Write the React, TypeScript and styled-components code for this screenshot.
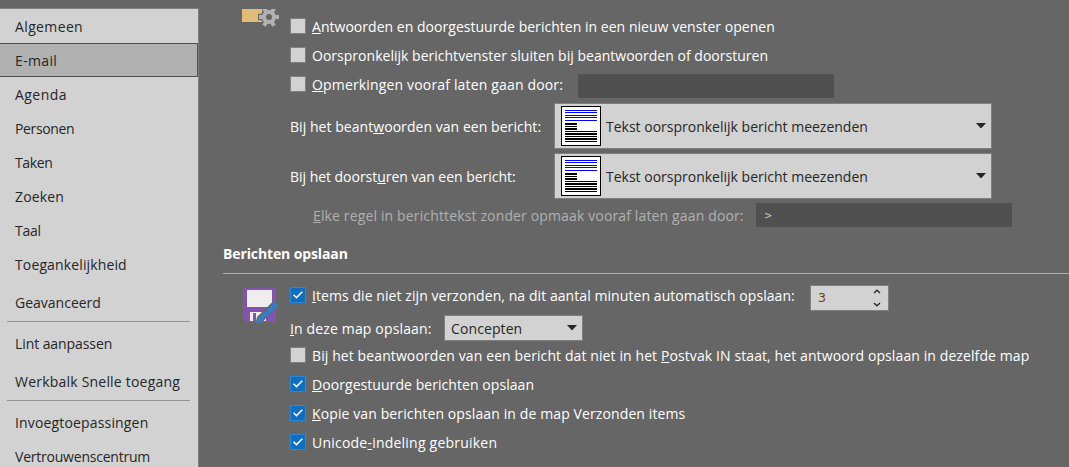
import React, { useState } from 'react';
import styled, { createGlobalStyle } from 'styled-components';

const GlobalStyle = createGlobalStyle`
  * {
    box-sizing: border-box;
  }

  body {
    margin: 0;
    background-color: #666666;
    overflow: hidden;
  }
`;

const Window = styled.div`
  display: flex;
  width: 1069px;
  height: 467px;
  overflow: hidden;

  background-color: #666666;
  color: #ffffff;
  font-family: 'Open Sans', 'Noto Sans', sans-serif;
  font-size: 14px;
  line-height: 20px;
  white-space: nowrap;
`;

const Sidebar = styled.nav`
  flex: none;
  width: 199px;
  height: 480px;
  margin-top: 8px;

  background-color: #d2d2d2;
  border-top: 1px solid #808080;
  border-right: 1px solid #808080;
`;

const NavItem = styled.div<{ $active: boolean; $spaced?: boolean }>`
  display: flex;
  align-items: center;
  height: 34px;
  margin-top: ${({ $spaced }) => ($spaced ? '4px' : '0')};
  padding: 0 0 0 15px;

  background-color: ${({ $active }) => ($active ? '#b1b1b1' : 'transparent')};
  border: 1px solid ${({ $active }) => ($active ? '#505050' : 'transparent')};
  border-left: none;
  color: #262626;
`;

const NavDivider = styled.div`
  height: 1px;
  margin: 2px 8px 4px 7px;

  background-color: #969696;
`;

const Content = styled.main`
  flex: 1;
  min-width: 0;
  padding: 9px 0 0 24px;
`;

const Section = styled.section`
  display: grid;
  grid-template-columns: 67px 1fr;
`;

const SectionIcon = styled.div<{ $top: number }>`
  padding: ${({ $top }) => $top}px 0 0 19px;

  svg {
    display: block;
  }
`;

const Rows = styled.div<{ $top: number }>`
  display: flex;
  flex-direction: column;
  padding-top: ${({ $top }) => $top}px;
`;

const SectionTitle = styled.h2`
  height: 47px;
  margin: 0;
  padding-top: 17px;

  border-bottom: 1px solid #b1b1b1;
  font-size: 14px;
  font-weight: 700;
  letter-spacing: -0.12px;
  line-height: 20px;
`;

const CheckRow = styled.label`
  display: flex;
  align-items: center;
  height: 29px;
  padding-bottom: 1px;
`;

const Box = styled.span<{ $checked: boolean }>`
  display: flex;
  flex: none;
  align-items: center;
  justify-content: center;
  width: 16px;
  height: 16px;
  margin-right: 6px;

  background-color: ${({ $checked }) => ($checked ? '#106ebe' : '#d2d2d2')};
  border: 1px solid ${({ $checked }) => ($checked ? '#2b88d8' : '#808080')};
`;

const FieldRow = styled.div<{ $top: number; $height: number; $indent?: number }>`
  display: flex;
  align-items: center;
  height: ${({ $height }) => $height}px;
  margin-top: ${({ $top }) => $top}px;
  padding-left: ${({ $indent = 0 }) => $indent}px;
`;

const FieldLabel = styled.span<{ $width: number; $disabled?: boolean }>`
  flex: none;
  width: ${({ $width }) => $width}px;

  color: ${({ $disabled }) => ($disabled ? '#b1b1b1' : '#ffffff')};
`;

const Label = styled.span<{ $spacing: number }>`
  display: block;
  padding-top: 2px;

  letter-spacing: ${({ $spacing }) => $spacing}px;
`;

const Key = styled.span`
  text-decoration: underline;
  text-decoration-thickness: 1px;
  text-underline-offset: 1px;
  text-decoration-skip-ink: none;
`;

const TextBox = styled.div<{ $shift?: number }>`
  display: flex;
  flex: none;
  align-items: center;
  width: 256px;
  height: 24px;
  margin-top: ${({ $shift = 0 }) => $shift}px;
  padding: 2px 0 0 8px;

  background-color: #505050;
  color: #d2c9a8;
  font-family: 'DejaVu Sans', sans-serif;
  font-size: 10px;
`;

const Select = styled.div<{ $width: number; $height: number }>`
  display: flex;
  flex: none;
  align-items: center;
  width: ${({ $width }) => $width}px;
  height: ${({ $height }) => $height}px;
  padding: 0 5px 0 6px;

  background-color: #d2d2d2;
  border: 1px solid #808080;
  color: #262626;

  svg {
    flex: none;
  }
`;

const SelectText = styled.span<{ $gap?: number }>`
  flex: 1;
  padding-left: ${({ $gap = 0 }) => $gap}px;
`;

const Spinner = styled.div`
  display: flex;
  flex: none;
  align-items: center;
  justify-content: space-between;
  width: 79px;
  height: 26px;
  margin-top: 6px;
  padding: 0 7px;

  background-color: #d2d2d2;
  border: 1px solid #808080;
  color: #7a3a08;
  font-family: 'DejaVu Sans', sans-serif;
  font-size: 12.5px;
`;

interface TextProps {
  text: string;
  spacing?: number;
}

// An underscore in front of a character marks its access key.
const Text: React.FC<TextProps> = ({ text, spacing = 0 }) => {
  const at = text.indexOf('_');

  if (at < 0) {
    return <Label $spacing={spacing}>{text}</Label>;
  }

  return (
    <Label $spacing={spacing}>
      {text.slice(0, at)}
      <Key>{text[at + 1]}</Key>
      {text.slice(at + 2)}
    </Label>
  );
};

interface CheckProps extends TextProps {
  initial?: boolean;
  labelWidth?: number;
  children?: React.ReactNode;
}

const Check: React.FC<CheckProps> = ({
  text,
  spacing,
  initial = false,
  labelWidth,
  children,
}) => {
  const [checked, setChecked] = useState(initial);

  return (
    <CheckRow>
      <Box $checked={checked} onClick={() => setChecked(!checked)}>
        {checked && (
          <svg width="14" height="14" viewBox="0 0 14 14">
            <path
              d="M2.5 6.8 5.5 9.6 11.3 3.8"
              fill="none"
              stroke="#ffffff"
              strokeWidth="1.5"
            />
          </svg>
        )}
      </Box>
      {labelWidth ? (
        <FieldLabel $width={labelWidth}>
          <Text text={text} spacing={spacing} />
        </FieldLabel>
      ) : (
        <Text text={text} spacing={spacing} />
      )}
      {children}
    </CheckRow>
  );
};

const Caret = () => (
  <svg width="10" height="9" viewBox="0 0 10 9">
    <path d="M0 1h10L5.5 6h-1z" fill="#262626" />
  </svg>
);

const MessageIcon = () => (
  <svg width="40" height="40" viewBox="0 0 40 40" shapeRendering="crispEdges">
    <rect width="40" height="40" fill="#000000" />
    <rect x="1" y="1" width="38" height="38" fill="#ffffff" />
    <path
      d="M4 4h32v1H4zM4 6h32v1H4zM4 9h32v1H4zM4 11h32v1H4zM4 14h32v1H4z"
      fill="#0000ff"
    />
    <path
      d="M4 17h12v2H4zM4 20h12v1H4zM4 22h12v2H4zM4 25h32v1H4zM4 27h32v2H4zM4 30h32v1H4zM4 32h32v2H4zM4 35h32v1H4z"
      fill="#000000"
    />
  </svg>
);

const GearIcon = () => (
  <svg width="38" height="18" viewBox="0 0 38 18">
    <rect width="20" height="13" fill="#e0bc78" />
    <circle cx="27" cy="8" r="8.2" fill="#666666" />
    <rect x="16" y="4.7" width="6" height="6.6" fill="#666666" />
    <g fill="#b1b1b1">
      {[0, 60, 120].map((angle) => (
        <path
          key={angle}
          d="M17 6h20v4H17z"
          transform={`rotate(${angle} 27 8)`}
        />
      ))}
      <circle cx="27" cy="8" r="7" />
    </g>
    <circle cx="27" cy="8" r="3" fill="#666666" />
  </svg>
);

const SaveIcon = () => (
  <svg width="37" height="37" viewBox="0 0 37 37">
    <path d="M1 0h33v34H4l-3-3z" fill="#8653ab" />
    <path d="M5 2h25v17H5zM8 24h16v9H8z" fill="#eeeeee" />
    <path d="M11 25h3v8h-3z" fill="#8653ab" />
    <path d="M32 12.5 36.5 17 20 34.5 13 37 15 29z" fill="#666666" />
    <path d="M33 13.5 36.5 17.5 19 34 14 36 15.5 31z" fill="#3a7cc0" />
    <path d="M29.5 16.5 33.5 20.5" stroke="#5d5f82" strokeWidth="0.7" />
  </svg>
);

const Arrows = () => (
  <svg width="8" height="18" viewBox="0 0 8 18">
    <path
      d="M1 4 4 1.2 7 4M1 14 4 16.8 7 14"
      fill="none"
      stroke="#262626"
      strokeWidth="1.3"
    />
  </svg>
);

interface Page {
  name: string;
  spacing: number;
  spaced?: boolean;
}

const pageGroups: Page[][] = [
  [
    { name: 'Algemeen', spacing: 0.37 },
    { name: 'E-mail', spacing: 0.35 },
    { name: 'Agenda', spacing: 0.45 },
    { name: 'Personen', spacing: -0.37 },
    { name: 'Taken', spacing: -0.35 },
    { name: 'Zoeken', spacing: 0.15 },
    { name: 'Taal', spacing: -0.25 },
    { name: 'Toegankelijkheid', spacing: 0.13 },
    { name: 'Geavanceerd', spacing: 0, spaced: true },
  ],
  [
    { name: 'Lint aanpassen', spacing: -0.08 },
    { name: 'Werkbalk Snelle toegang', spacing: 0.21 },
  ],
  [
    { name: 'Invoegtoepassingen', spacing: 0.16 },
    { name: 'Vertrouwenscentrum', spacing: -0.22 },
  ],
];

const App: React.FC = () => {
  const [active, setActive] = useState('E-mail');

  return (
    <>
      <GlobalStyle />
      <Window>
        <Sidebar>
          {pageGroups.map((pages, group) => (
            <React.Fragment key={pages[0].name}>
              {group > 0 && <NavDivider />}
              {pages.map(({ name, spacing, spaced }) => (
                <NavItem
                  key={name}
                  $active={name === active}
                  $spaced={spaced || name === 'Werkbalk Snelle toegang'}
                  onClick={() => setActive(name)}
                >
                  <Text text={name} spacing={spacing} />
                </NavItem>
              ))}
            </React.Fragment>
          ))}
        </Sidebar>
        <Content>
          <Section>
            <SectionIcon $top={0}>
              <GearIcon />
            </SectionIcon>
            <Rows $top={3}>
              <Check
                text="_Antwoorden en doorgestuurde berichten in een nieuw venster openen"
                spacing={0.03}
              />
              <Check
                text="Oorspronkelijk berichtvenster sluiten bij beantwoorden of doorsturen"
                spacing={0.016}
              />
              <Check
                text="_Opmerkingen vooraf laten gaan door:"
                spacing={0.16}
                labelWidth={266}
              >
                <TextBox $shift={4} />
              </Check>
              <FieldRow $top={4} $height={46}>
                <FieldLabel $width={264}>
                  <Text
                    text="Bij het beant_woorden van een bericht:"
                    spacing={0.05}
                  />
                </FieldLabel>
                <Select $width={438} $height={46}>
                  <MessageIcon />
                  <SelectText $gap={5}>
                    <Text text="Tekst oorspronkelijk bericht meezenden" />
                  </SelectText>
                  <Caret />
                </Select>
              </FieldRow>
              <FieldRow $top={4} $height={46}>
                <FieldLabel $width={264}>
                  <Text
                    text="Bij het doorst_uren van een bericht:"
                    spacing={-0.03}
                  />
                </FieldLabel>
                <Select $width={438} $height={46}>
                  <MessageIcon />
                  <SelectText $gap={5}>
                    <Text text="Tekst oorspronkelijk bericht meezenden" />
                  </SelectText>
                  <Caret />
                </Select>
              </FieldRow>
              <FieldRow $top={4} $height={24} $indent={23}>
                <FieldLabel $width={443} $disabled>
                  <Text
                    text="_Elke regel in berichttekst zonder opmaak vooraf laten gaan door:"
                    spacing={0.14}
                  />
                </FieldLabel>
                <TextBox>&gt;</TextBox>
              </FieldRow>
            </Rows>
          </Section>
          <SectionTitle>Berichten opslaan</SectionTitle>
          <Section>
            <SectionIcon $top={14}>
              <SaveIcon />
            </SectionIcon>
            <Rows $top={7}>
              <Check
                text="_Items die niet zijn verzonden, na dit aantal minuten automatisch opslaan:"
                spacing={0.07}
                labelWidth={498}
                initial
              >
                <Spinner>
                  3
                  <Arrows />
                </Spinner>
              </Check>
              <FieldRow $top={5} $height={26}>
                <FieldLabel $width={154}>
                  <Text text="_In deze map opslaan:" spacing={0.15} />
                </FieldLabel>
                <Select $width={139} $height={26}>
                  <SelectText>
                    <Text text="Concepten" spacing={0.1} />
                  </SelectText>
                  <Caret />
                </Select>
              </FieldRow>
              <Check
                text="Bij het beantwoorden van een bericht dat niet in het _Postvak IN staat, het antwoord opslaan in dezelfde map"
                spacing={0.1}
              />
              <Check
                text="_Doorgestuurde berichten opslaan"
                spacing={0.06}
                initial
              />
              <Check
                text="_Kopie van berichten opslaan in de map Verzonden items"
                spacing={0.11}
                initial
              />
              <Check
                text="Unicode_-indeling gebruiken"
                spacing={0.22}
                initial
              />
            </Rows>
          </Section>
        </Content>
      </Window>
    </>
  );
};

export default App;
